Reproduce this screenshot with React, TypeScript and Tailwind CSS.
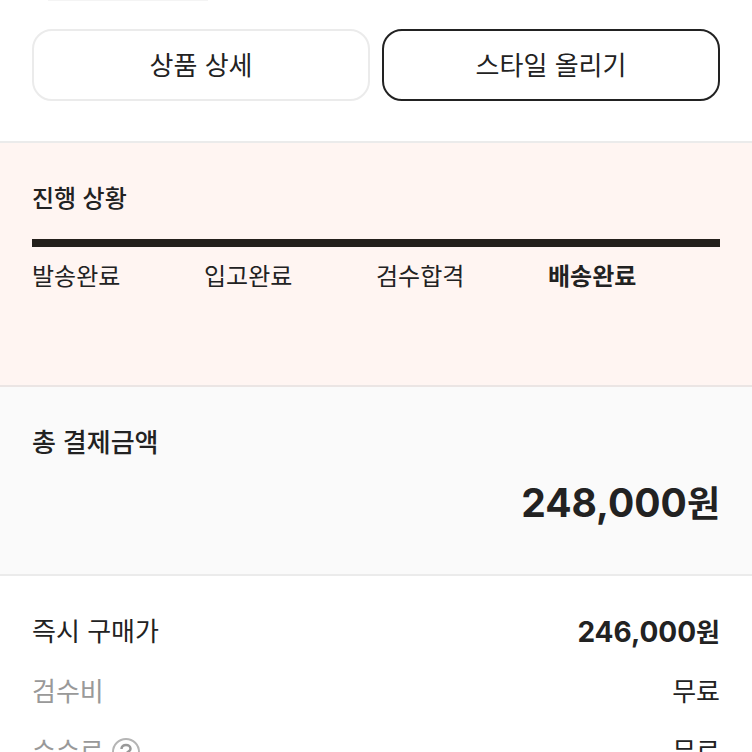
import React from "react";

const steps = [
  { label: "발송완료", current: false },
  { label: "입고완료", current: false },
  { label: "검수합격", current: false },
  { label: "배송완료", current: true },
];

const Actions = () => {
  return (
    <div className="px-8 pb-10 border-b-2 border-[#ebebeb]">
      <div className="ml-4 w-40 h-px bg-[#f4f4f4]" />
      <div className="mt-7 flex gap-3">
        <button className="flex-1 h-[72px] rounded-[20px] border-2 border-[#ebebeb] text-[26px]">
          상품 상세
        </button>
        <button className="flex-1 h-[72px] rounded-[20px] border-2 border-[#222] text-[26px]">
          스타일 올리기
        </button>
      </div>
    </div>
  );
};

const Progress = () => {
  return (
    <section className="px-8 pt-9 pb-[90px] bg-[#fff5f2] border-b-2 border-[#ebe5e4]">
      <h2 className="text-[24px] leading-10 font-medium">진행 상황</h2>
      <div className="mt-5 h-2 bg-[#24201c]" />
      <ol className="mt-3 grid grid-cols-4 text-[24px] leading-9">
        {steps.map((step) => (
          <li key={step.label} className={step.current ? "font-bold" : ""}>
            {step.label}
          </li>
        ))}
      </ol>
    </section>
  );
};

const Total = () => {
  return (
    <section className="px-8 pt-9 pb-[47px] bg-[#fafafa] border-b-2 border-[#ebebeb]">
      <h2 className="text-[26px] leading-10 font-medium">총 결제금액</h2>
      <p className="mt-4 text-right text-[39px] leading-12 font-bold">
        248,000<span className="text-[36px] leading-none">원</span>
      </p>
    </section>
  );
};

const PriceList = () => {
  return (
    <dl className="px-8 pt-9 text-[26px] leading-10">
      <div className="flex justify-between">
        <dt>즉시 구매가</dt>
        <dd className="text-[28px] font-bold">
          246,000<span className="text-[26px] leading-none">원</span>
        </dd>
      </div>
      <div className="mt-5 flex justify-between">
        <dt className="text-[#999]">검수비</dt>
        <dd>무료</dd>
      </div>
      <div className="mt-5 flex justify-between">
        <dt className="flex items-center gap-2 text-[#999]">
          수수료
          <button aria-label="수수료 안내">
            <svg width="28" height="28" viewBox="0 0 28 28" fill="none">
              <circle cx="14" cy="14" r="13" stroke="#b5b5b5" strokeWidth="2" />
              <path
                d="M9.5 11C9.5 8.5 11.5 7 14 7s4.5 1.5 4.5 3.7c0 3-4.5 3.3-4.5 6.3M14 19v2.5"
                stroke="#999"
                strokeWidth="2.5"
              />
            </svg>
          </button>
        </dt>
        <dd>무료</dd>
      </div>
    </dl>
  );
};

const App = () => {
  return (
    <main className="h-screen overflow-hidden bg-white text-[#222] font-['Inter','Noto_Sans_CJK_KR',sans-serif]">
      <Actions />
      <Progress />
      <Total />
      <PriceList />
    </main>
  );
};

export default App;
